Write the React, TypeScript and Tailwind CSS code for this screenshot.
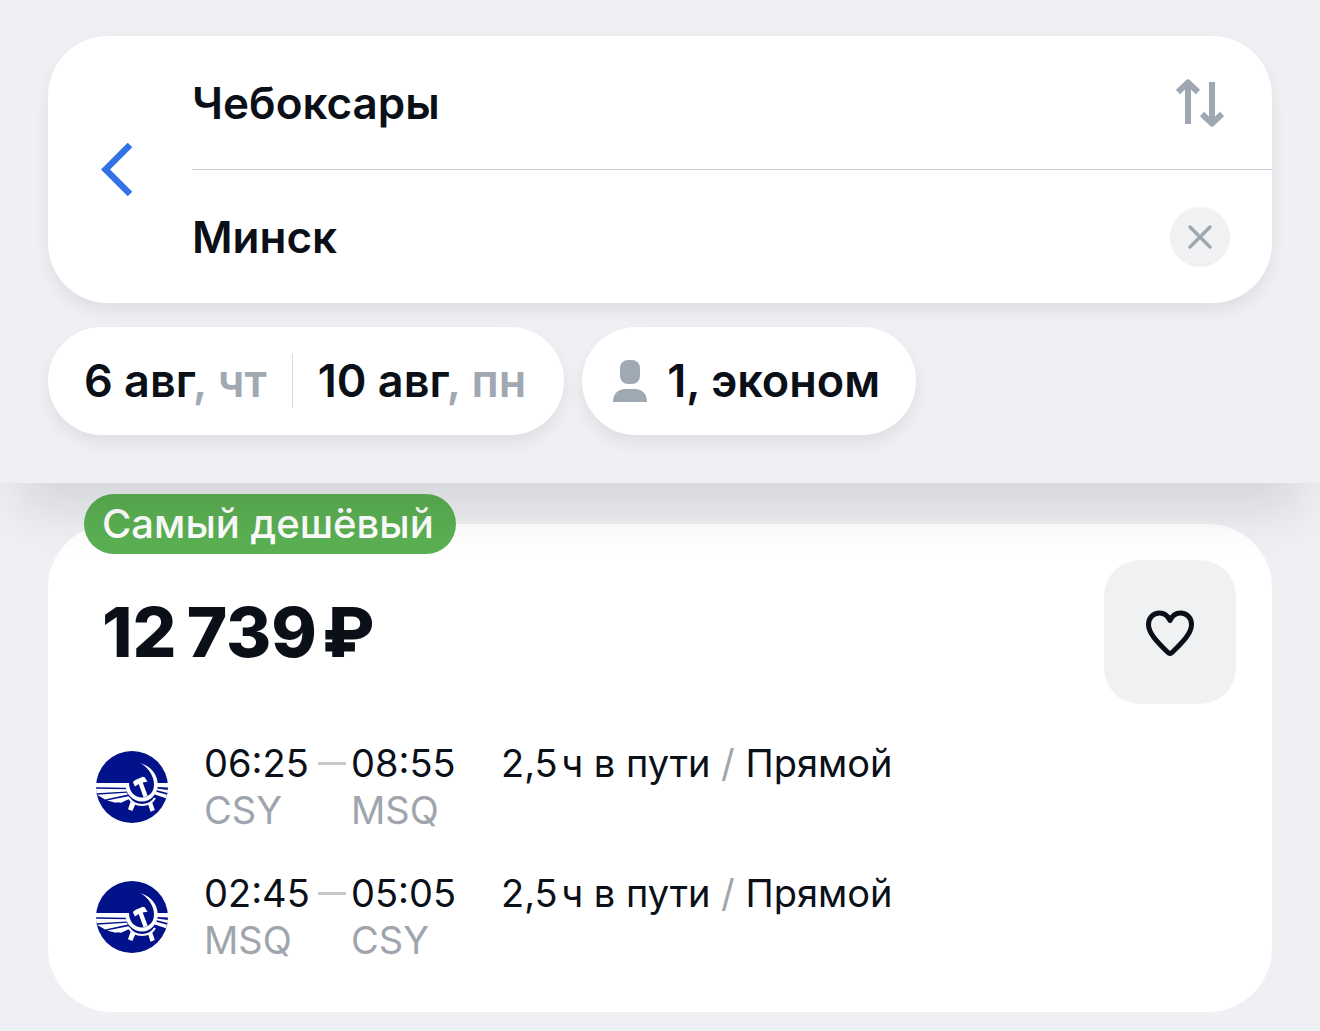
import React from "react";

type Stop = { time: string; code: string };
type Flight = { from: Stop; to: Stop; duration: string; stops: string };

const flights: Flight[] = [
  {
    from: { time: "06:25", code: "CSY" },
    to: { time: "08:55", code: "MSQ" },
    duration: "2,5\u200Aч в пути",
    stops: "Прямой",
  },
  {
    from: { time: "02:45", code: "MSQ" },
    to: { time: "05:05", code: "CSY" },
    duration: "2,5\u200Aч в пути",
    stops: "Прямой",
  },
];

function BackIcon() {
  return (
    <svg width="32" height="54" viewBox="0 0 32 54" fill="none" aria-hidden="true">
      <path d="M29 2 4.500 26.500 29 51" stroke="#3272e6" strokeWidth="6.500" />
    </svg>
  );
}

function SwapIcon() {
  return (
    <svg width="48" height="48" viewBox="0 0 48 48" fill="none" stroke="#9fa7b2" strokeWidth="6" aria-hidden="true">
      <path d="M12 45V4M2 13 12 3.500 22 13" strokeLinejoin="round" />
      <path d="M36 3v41M26 35l10 9.500L46 35" strokeLinejoin="round" />
    </svg>
  );
}

function ClearIcon() {
  return (
    <svg width="24" height="24" viewBox="0 0 24 24" fill="none" aria-hidden="true">
      <path d="M2 2l20 20M22 2 2 22" stroke="#9fa7b2" strokeWidth="3.300" strokeLinecap="round" />
    </svg>
  );
}

function PersonIcon() {
  return (
    <svg width="34" height="42" viewBox="0 0 34 42" fill="#9fa9b4" aria-hidden="true">
      <rect x="7" y="0" width="20" height="24" rx="8" />
      <path d="M0 42c0-8 5-13 12-13h10c7 0 12 5 12 13z" />
    </svg>
  );
}

function HeartIcon() {
  return (
    <svg width="48" height="48" viewBox="0 0 48 48" fill="none" aria-hidden="true">
      <path
        d="M24 12.500C22 8 18 5 13.500 5 7.200 5 2.500 10 2.500 16.500 2.500 25 11 34 22 44.500q2 1.800 4 0C37 34 45.500 25 45.500 16.500 45.500 10 40.800 5 34.500 5 30 5 26 8 24 12.500z"
        stroke="#0b1018"
        strokeWidth="5"
        strokeLinejoin="round"
      />
    </svg>
  );
}

function AirlineLogo() {
  return (
    <svg width="72" height="72" viewBox="0 0 72 72" role="img" aria-label="Аэрофлот" className="shrink-0">
      <circle cx="36" cy="36" r="36" fill="#02128a" />
      <g fill="#fff">
        <path d="M0 32h31v4.800L0 36.300z" />
        <path d="M0 37.800l31 .4v2.300L.500 42.200z" />
        <path d="M1 43.700l30-2 .8 1.700L9 48.500z" />
        <path d="M11 49.500l21.500-4.300 1.800 2.300L25 51.800l-3.500-.5-1.500.5z" />
        <path d="M61 32h11v4.500L61 36z" />
        <path d="M60.500 37.500 72 39l-.5 3-11.500-3z" />
        <path d="M59.500 40.500 71 43.700l-1 3.600-12-4z" />
      </g>
      <circle cx="45.500" cy="36" r="15" fill="#02128a" />
      <path
        d="M44 12c11 3 17.800 12 17.800 21.500C61.800 43 54.500 50.500 46 50.500s-16.500-7-16.500-16.500V32h3.500C33 41 39 46.500 46 46.500c7 0 12-5.500 12-13C58 25 52.500 16.500 44 12z"
        fill="#fff"
      />
      <path d="M33 47c3 5 7.500 7 13 7s10-2 13-7" stroke="#fff" strokeWidth="2.200" fill="none" />
      <path d="M34.500 51l5 2-3.200 7-4.300-1.800z" fill="#fff" />
      <path d="M52 53l4.200-1.500 2.600 7.500-4.200 1.800z" fill="#fff" />
      <path d="M36.800 31l2.500-2 7.500-3.300 1.900.6 2.800 4.400-4.800.8 5 13.500-4.200 1.300-4.800-13.300-3.700 2.500z" fill="#fff" />
    </svg>
  );
}

function FlightRow({ flight }: { flight: Flight }) {
  return (
    <li className="flex items-center">
      <AirlineLogo />
      <div className="ml-9 flex text-[38px] leading-[47px]">
        <div className="w-[147px]">
          <div className="flex items-center">
            <span className="w-[106px]">{flight.from.time}</span>
            <span className="ml-2 h-[3px] w-7 bg-[#c6c8ca]" />
          </div>
          <div className="text-[#a0a5ad]">{flight.from.code}</div>
        </div>
        <div className="w-[150px]">
          <div>{flight.to.time}</div>
          <div className="text-[#a0a5ad]">{flight.to.code}</div>
        </div>
        <div className="whitespace-nowrap">
          {flight.duration} <span className="text-[#a0a5ad]">/</span> {flight.stops}
        </div>
      </div>
    </li>
  );
}

export default function App() {
  return (
    <div className="min-h-screen bg-[#eff0f4] pb-5 font-['Inter',sans-serif] text-[#0b1018]">
      <header className="relative z-10 bg-[#eff0f4] px-12 pt-9 pb-12 shadow-[0_48px_48px_-20px_rgba(0,0,0,0.11)]">
        <form className="flex rounded-[60px] bg-white shadow-[0_8px_16px_rgba(0,0,0,0.07)]" onSubmit={(e) => e.preventDefault()}>
          <button type="button" aria-label="Назад" className="flex w-36 shrink-0 items-center pl-[53px]">
            <BackIcon />
          </button>
          <div className="min-w-0 flex-1">
            <div className="flex h-[134px] items-center border-b border-[#cdced2] pr-12">
              <input aria-label="Откуда" defaultValue="Чебоксары" className="min-w-0 flex-1 bg-transparent text-[44px] font-semibold outline-none" />
              <button type="button" aria-label="Поменять местами">
                <SwapIcon />
              </button>
            </div>
            <div className="flex h-[133px] items-center pr-[42px]">
              <input aria-label="Куда" defaultValue="Минск" className="min-w-0 flex-1 bg-transparent text-[44px] font-semibold outline-none" />
              <button type="button" aria-label="Очистить" className="flex size-[60px] items-center justify-center rounded-full bg-[#eff1f3]">
                <ClearIcon />
              </button>
            </div>
          </div>
        </form>
        <div className="mt-6 flex gap-[18px] text-[45px] font-semibold whitespace-nowrap">
          <div className="flex h-[108px] items-center rounded-full bg-white pr-[38px] pl-9 shadow-[0_8px_16px_rgba(0,0,0,0.07)]">
            <button type="button">
              6 авг<span className="text-[#a0a8b2]">, чт</span>
            </button>
            <span className="mx-[25px] h-[54px] w-px bg-[#d8dadd]" />
            <button type="button">
              10 авг<span className="text-[#a0a8b2]">, пн</span>
            </button>
          </div>
          <button type="button" className="flex h-[108px] items-center gap-5 rounded-full bg-white pr-9 pl-[31px] shadow-[0_8px_16px_rgba(0,0,0,0.07)]">
            <PersonIcon />
            1, эконом
          </button>
        </div>
      </header>

      <main className="px-12 pt-[41px]">
        <article className="relative rounded-[64px] bg-white px-9 pt-9 pb-12">
          <div className="absolute -top-[30px] left-9 flex h-[60px] items-center rounded-full bg-[#5bb053] pr-[22px] pl-[18px] text-[40px] font-medium whitespace-nowrap text-white">
            Самый дешёвый
          </div>
          <div className="flex items-center justify-between pl-[18px]">
            <div className="text-[69px] leading-[80px] font-extrabold whitespace-nowrap">12&#8201;739&#8202;₽</div>
            <button type="button" aria-label="В избранное" className="flex h-36 w-[132px] items-center justify-center rounded-[36px] bg-[#eff1f3]">
              <HeartIcon />
            </button>
          </div>
          <ul className="mt-9 flex flex-col gap-9 pl-3">
            {flights.map((flight, i) => (
              <FlightRow key={i} flight={flight} />
            ))}
          </ul>
        </article>
      </main>
    </div>
  );
}
